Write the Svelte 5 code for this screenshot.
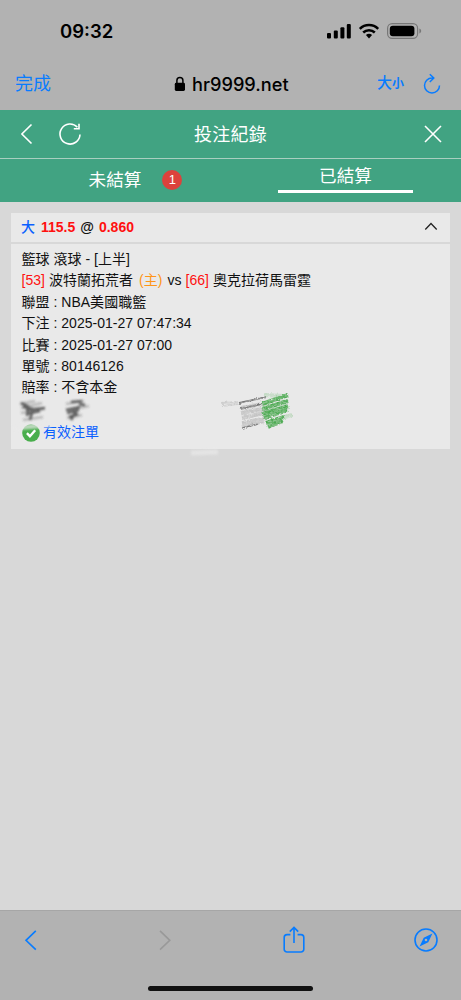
<script lang="ts">
  type Part = { text: string; tone?: "red" | "orange" };

  const rows: Part[][] = [
    [{ text: "籃球 滾球 - [上半]" }],
    [
      { text: "[53]", tone: "red" },
      { text: "波特蘭拓荒者" },
      { text: "(主)", tone: "orange" },
      { text: "vs" },
      { text: "[66]", tone: "red" },
      { text: "奧克拉荷馬雷霆" },
    ],
    [{ text: "聯盟 : NBA美國職籃" }],
    [{ text: "下注 : 2025-01-27 07:47:34" }],
    [{ text: "比賽 : 2025-01-27 07:00" }],
    [{ text: "單號 : 80146126" }],
    [{ text: "賠率 : 不含本金" }],
  ];

  const pending = 1;
  let tab = $state("settled");
  let open = $state(true);
</script>

<div class="screen">
  <div class="status">
    <span class="time">09:32</span>
    <svg width="96" height="18" viewBox="0 0 96 18">
      <rect x="1" y="11" width="4" height="5.5" rx="1.1" />
      <rect x="7.8" y="8.4" width="4" height="8.1" rx="1.1" />
      <rect x="14.4" y="5.2" width="4" height="11.3" rx="1.1" />
      <rect x="20.8" y="2" width="4" height="14.5" rx="1.1" />
      <g class="waves">
        <path d="M33.8 6.8a13.2 13.2 0 0 1 18.4 0" />
        <path d="M37.2 10.5a8.4 8.4 0 0 1 11.6 0" />
      </g>
      <path d="M39.9 13.1a4.6 4.6 0 0 1 6.2 0L43 16.4z" />
      <rect class="case" x="61.6" y="1.7" width="30" height="14.6" rx="4.6" />
      <rect x="63.8" y="3.8" width="24.6" height="10.4" rx="3" />
      <path class="cap" d="M93.4 6.6c2.4.8 2.4 4 0 4.8z" />
    </svg>
  </div>

  <div class="address">
    <span class="done">完成</span>
    <span class="host">
      <svg width="12" height="16" viewBox="0 0 12 16">
        <rect x="0.8" y="6.8" width="10.2" height="8.2" rx="1.4" />
        <path class="shackle" d="M2.9 7V4.6a3 3 0 0 1 6 0V7" />
      </svg>
      hr9999.net
    </span>
    <span class="size">大<small>小</small></span>
    <svg class="reload" width="20" height="22" viewBox="0 0 20 22">
      <path d="M11.3 5H10a7.5 7.5 0 1 0 7.5 7.5M7.8 1.2 11.8 5 7.8 9" />
    </svg>
  </div>

  <header>
    <svg width="60" height="26" viewBox="0 0 60 26">
      <path d="M10.5 3.5 0.9 13l9.6 9.5" />
      <path d="M59 13.5a10 10 0 1 1-2.6-7.2M58 2.8v4.9h-5.2" />
    </svg>
    <h1>投注紀錄</h1>
    <svg class="close" width="18" height="18" viewBox="0 0 18 18">
      <path d="M1 1l16 16M17 1 1 17" />
    </svg>
  </header>

  <nav>
    <button onclick={() => (tab = "pending")} class:active={tab === "pending"}>
      <span class="label">未結算</span>
      <span class="badge">{pending}</span>
    </button>
    <button onclick={() => (tab = "settled")} class:active={tab === "settled"}>
      <span class="label">已結算</span>
    </button>
  </nav>

  <main>
    <section>
      <button class="bet" onclick={() => (open = !open)}>
        <span class="pick">大</span>
        <b class="red">115.5</b>
        <b>@</b>
        <b class="red">0.860</b>
        <svg class:closed={!open} width="14" height="9" viewBox="0 0 14 9">
          <path d="M1.3 7.5 7 1.5l5.7 6" />
        </svg>
      </button>
      {#if open}
        <div class="details">
          {#each rows as parts}
            <p>
              {#each parts as part}
                <span class={part.tone}>{part.text}</span>
              {/each}
            </p>
          {/each}
          <div class="hidden-row"></div>
          <p class="valid">
            <svg width="18" height="18" viewBox="0 0 18 18">
              <circle cx="9" cy="9" r="8.8" />
              <path d="M4.9 9.2 7.9 12.2 13.2 6.2" />
            </svg>
            有效注單
          </p>
        </div>
      {/if}
      <!-- pencil strokes over the amounts -->
      <svg class="scribble" width="439" height="70" viewBox="0 0 439 70">
        <defs>
          <filter id="soft" x="-20%" y="-20%" width="140%" height="140%">
            <feGaussianBlur stdDeviation="0.9" />
          </filter>
          <filter id="grain" x="-10%" y="-10%" width="120%" height="120%">
            <feTurbulence type="fractalNoise" baseFrequency="0.35 0.6" numOctaves="2" seed="4" result="noise" />
            <feColorMatrix values="0 0 0 0 0  0 0 0 0 0  0 0 0 0 0  0 0 0 1 0.3" />
            <feComposite in="SourceGraphic" operator="in" result="stroke" />
            <feDisplacementMap in="stroke" in2="noise" scale="3" xChannelSelector="R" yChannelSelector="G" />
            <feGaussianBlur stdDeviation="0.6" />
          </filter>
        </defs>
        <path class="eraser" filter="url(#soft)" d="M2 34l24-2 14-1M180 59l27-1" />
        <g class="ink" filter="url(#soft)">
          <path class="pale" d="M9 10l15-3M10 14l21-5M10 19l23-4M12 26l20-3M55 10l18-3M56 16l22-4M56 24l15-3" />
          <path d="M10 9l8 4M12 13l10 2M15 16l19-2M15 20l14-3M17 17l-1 5M22 15l-3 11M60 8l11-1M68 10l6 1M55 16l14-3M56 19l12-3M58 23l9-3M60 26l5-9" />
        </g>
        <g filter="url(#grain)">
          <path class="pencil faint" d="M210 9l17-1M212 12l15-2" />
          <path class="pencil light" d="M230 14l26-5M230 19l26-5M231 24l26-6M231 29l25-5M231 33l22-6" />
          <path class="pencil" d="M228 9l27-6M229 15l26-6M231 34l16-4" />
          <path class="green faint" d="M253 1l20 1M268 8l9-1M268 16l10-2M266 25l15-4" />
          <path class="green" d="M251 10l26-9M251 15l26-8M251 20l26-8M253 24l23-8M255 29l18-6M257 33l15-6" />
        </g>
      </svg>
    </section>
  </main>

  <footer>
    <div class="tools">
      <svg width="14" height="22" viewBox="0 0 14 22">
        <path d="M11.8 1.9 2 11.3l9.8 9.3" />
      </svg>
      <svg class="forward" width="14" height="22" viewBox="0 0 14 22">
        <path d="M2 1.9l9.8 9.4L2 20.6" />
      </svg>
      <svg class="share" width="22" height="28" viewBox="0 0 22 28">
        <path d="M7.4 8.6H4a2.8 2.8 0 0 0-2.8 2.8v11.8A2.8 2.8 0 0 0 4 26h14a2.8 2.8 0 0 0 2.8-2.8V11.4A2.8 2.8 0 0 0 18 8.6h-3.4M11 17V1.7M6.8 5.6 11 1.4l4.2 4.2" />
      </svg>
      <svg class="compass" width="24" height="24" viewBox="0 0 24 24">
        <circle cx="12" cy="12" r="11" />
        <path fill-rule="evenodd" d="M18.4 5.6 14.3 14.3 5.6 18.4 9.7 9.7zM12 10.7a1.3 1.3 0 1 0 0 2.6a1.3 1.3 0 0 0 0-2.6z" />
      </svg>
    </div>
    <div class="home"></div>
  </footer>
</div>

<style>
  :global(body) {
    margin: 0;
  }

  .screen {
    display: flex;
    flex-direction: column;
    height: 1000px;
    background: #d8d8d8;
    color: #111;
    font-family: "Liberation Sans", "Noto Sans CJK TC", sans-serif;
    font-size: 14px;
  }

  svg {
    display: block;
    flex: none;
  }

  button {
    border: 0;
    padding: 0;
    background: none;
    color: inherit;
    font: inherit;
  }

  .status,
  .address {
    display: flex;
    align-items: center;
    box-sizing: border-box;
    background: #b2b2b2;
    color: #000;
    font-family: Inter, "Noto Sans CJK TC", sans-serif;
  }

  .status {
    justify-content: space-between;
    height: 62px;
    padding: 0 39px 0 60px;
  }

  .time {
    font-size: 18.5px;
    font-weight: 600;
  }

  .waves {
    fill: none;
    stroke: #000;
    stroke-width: 2.5;
  }

  .case {
    fill: none;
    stroke: #777;
    stroke-width: 1.2;
  }

  .cap {
    fill: #777;
  }

  .address {
    height: 48px;
    padding: 0 19px 5px 15px;
  }

  .done {
    width: 159px;
    color: #087cff;
    font-size: 18px;
    line-height: 24px;
  }

  .host {
    display: flex;
    gap: 6px;
    align-items: center;
    width: 203px;
    font-size: 18.2px;
    font-weight: 500;
  }

  .shackle {
    fill: none;
    stroke: #000;
    stroke-width: 1.5;
  }

  .size {
    width: 45px;
    color: #087cff;
    font-size: 15px;
    font-weight: 500;
    line-height: 16px;
    white-space: nowrap;
  }

  .size small {
    font-size: 12px;
    font-weight: 700;
  }

  .reload {
    fill: none;
    stroke: #087cff;
    stroke-width: 1.5;
  }

  header {
    display: flex;
    align-items: center;
    justify-content: space-between;
    box-sizing: border-box;
    height: 49px;
    padding: 0 19px 1px 21px;
    border-bottom: 1px solid #a9cfc0;
    background: #41a382;
    color: #fff;
  }

  header svg {
    fill: none;
    stroke: #fff;
    stroke-width: 1.6;
  }

  h1 {
    margin: 0 44px 2px 0;
    font-size: 18px;
    font-weight: 400;
    letter-spacing: 0.3px;
  }

  nav {
    display: flex;
    height: 43px;
    background: #41a382;
    color: #fff;
  }

  nav button {
    display: flex;
    flex: 1;
    gap: 21px;
    align-items: center;
    justify-content: center;
    padding: 0 7px 1px 0;
    font-size: 17.6px;
  }

  nav .label {
    margin-top: -3px;
  }

  nav button.active {
    flex: none;
    align-self: flex-start;
    width: 135px;
    height: 34px;
    margin: 0 48px 0 0;
    padding: 3px 0 0;
    border-bottom: 3px solid #fff;
  }

  .badge {
    width: 20px;
    border-radius: 50%;
    background: #dc423c;
    font-size: 13px;
    line-height: 20px;
    text-align: center;
  }

  main {
    flex: 1;
    padding: 11px 11px 0;
  }

  section {
    position: relative;
    background: #e9e9e9;
  }

  .bet {
    display: flex;
    gap: 5px;
    align-items: center;
    box-sizing: border-box;
    width: 100%;
    height: 31px;
    padding: 0 12px 2px 10px;
    border-bottom: 2px solid #d8d8d8;
  }

  .bet svg {
    margin-left: auto;
    fill: none;
    stroke: #222;
    stroke-width: 1.3;
  }

  .bet svg.closed {
    transform: rotate(180deg);
  }

  .pick {
    margin-right: 1px;
    color: #0a60ff;
    font-weight: 500;
    line-height: 18px;
  }

  .red {
    color: #ff1010;
  }

  .orange {
    margin: 0 1px 0 2px;
    color: #ff9518;
  }

  .details {
    padding: 5px 11px 6px 10.5px;
  }

  p {
    display: flex;
    gap: 4px;
    margin: 0;
    letter-spacing: 0.02px;
    line-height: 21.4px;
    white-space: nowrap;
  }

  .hidden-row {
    height: 23px;
  }

  .valid {
    gap: 3.5px;
    align-items: center;
    color: #0a60ff;
  }

  .valid circle {
    fill: #49ae4c;
  }

  .valid path {
    fill: none;
    stroke: #fff;
    stroke-width: 2.4;
  }

  .scribble {
    position: absolute;
    bottom: -15px;
    left: 0;
    overflow: visible;
    fill: none;
    pointer-events: none;
  }

  .eraser {
    stroke: #e9e9e9;
    stroke-width: 5;
    opacity: 0.7;
  }

  .ink {
    stroke: #333;
    stroke-width: 2.6;
    opacity: 0.75;
  }

  .pale {
    opacity: 0.35;
  }

  .pencil {
    stroke: #777;
    stroke-width: 1.8;
  }

  .pencil.light {
    stroke: #c4c4c4;
    stroke-width: 4;
  }

  .green {
    stroke: #4caa51;
    stroke-width: 4;
  }

  .faint {
    opacity: 0.25;
  }

  footer {
    display: flex;
    flex-direction: column;
    align-items: center;
    box-sizing: border-box;
    height: 90px;
    border-top: 1px solid #a6a6a6;
    background: #b2b2b2;
  }

  .tools {
    display: flex;
    align-items: center;
    box-sizing: border-box;
    width: 100%;
    height: 57px;
    padding: 0 23px 0 24px;
  }

  .tools svg {
    fill: none;
    stroke: #087cff;
    stroke-width: 1.6;
  }

  .tools .forward {
    margin-left: 120px;
    stroke: #999;
  }

  .share {
    margin-left: 111px;
  }

  .compass {
    margin-left: auto;
  }

  .tools .compass path {
    fill: #087cff;
    stroke: none;
  }

  .home {
    width: 165px;
    height: 5px;
    margin-top: 18px;
    border-radius: 3px;
    background: #111;
  }
</style>
